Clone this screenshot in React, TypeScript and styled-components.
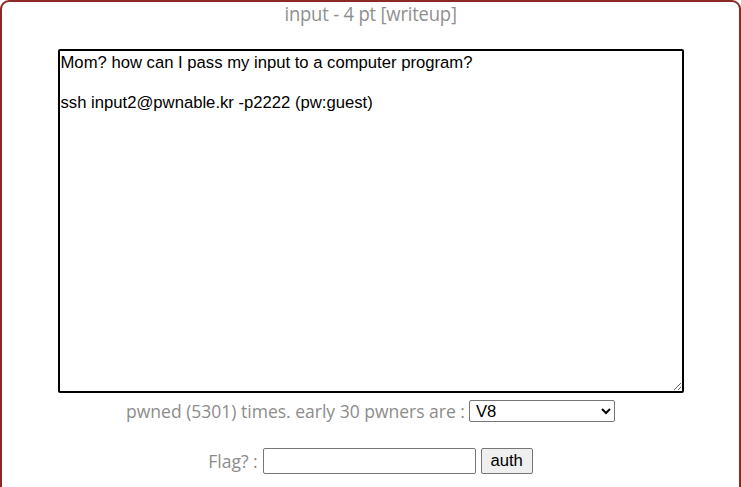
import React from "react";
import styled, { createGlobalStyle } from "styled-components";

const Global = createGlobalStyle`
  html, body { margin: 0; padding: 0; background: #ffffff; overflow: hidden; }
  #root { width: 741px; height: 487px; overflow: hidden; }
`;

const Frame = styled.div`
  box-sizing: border-box;
  width: 741px;
  height: 520px;
  border: 2px solid #8b2a24;
  border-radius: 9px 9px 0 0;
  background: #fff;
  display: flex;
  flex-direction: column;
  align-items: center;
`;

const Title = styled.div`
  margin-top: 0px;
  font-family: "Open Sans", sans-serif;
  font-size: 20px;
  color: #8f8f8f;
  line-height: 24px;
  height: 25px;
  transform: scaleX(0.92);
  letter-spacing: -0.2px;
`;

const Problem = styled.textarea`
  box-sizing: border-box;
  margin-top: 22px;
  width: 626px;
  height: 344px;
  border: 2px solid #000;
  border-radius: 2px;
  padding: 2px 1px 1px;
  font-family: "Liberation Sans", Arial, sans-serif;
  font-size: 16.67px;
  line-height: 20px;
  color: #000;
  resize: both;
  outline: none;
`;

const Row = styled.div<{ $top: number }>`
  margin-top: ${(p) => p.$top}px;
  display: flex;
  align-items: center;
  font-family: "Open Sans", sans-serif;
  font-size: 17.5px;
  line-height: 24px;
  color: #8c8c8c;
`;

const Label = styled.span<{ $gap: number }>`
  margin-right: ${(p) => p.$gap}px;
`;

const Select = styled.select`
  box-sizing: border-box;
  width: 146px;
  height: 22px;
  font-family: "Liberation Sans", Arial, sans-serif;
  font-size: 16.67px;
  color: #000;
  border: 1px solid #767676;
  border-radius: 2px;
  background: #fff;
  padding: 0 2px;
`;

const FlagInput = styled.input`
  box-sizing: border-box;
  width: 213px;
  height: 26px;
  border: 1px solid #767676;
  border-radius: 2px;
  font-family: "Liberation Sans", Arial, sans-serif;
  font-size: 16px;
`;

const AuthButton = styled.button`
  box-sizing: border-box;
  margin-left: 5px;
  width: 52px;
  height: 26px;
  border: 1px solid #767676;
  border-radius: 2px;
  background: #efefef;
  font-family: "Liberation Sans", Arial, sans-serif;
  font-size: 16.67px;
  color: #000;
  padding: 0;
`;

export default function App() {
  return (
    <>
      <Global />
      <Frame>
        <Title>input - 4 pt [writeup]</Title>
        <Problem
          readOnly
          defaultValue={
            "Mom? how can I pass my input to a computer program?\n\nssh input2@pwnable.kr -p2222 (pw:guest)"
          }
        />
        <Row $top={6}>
          <Label $gap={4}>pwned (5301) times. early 30 pwners are :</Label>
          <Select defaultValue="V8">
            <option>V8</option>
          </Select>
        </Row>
        <Row $top={25}>
          <Label $gap={5}>Flag? :</Label>
          <FlagInput type="text" />
          <AuthButton>auth</AuthButton>
        </Row>
      </Frame>
    </>
  );
}
